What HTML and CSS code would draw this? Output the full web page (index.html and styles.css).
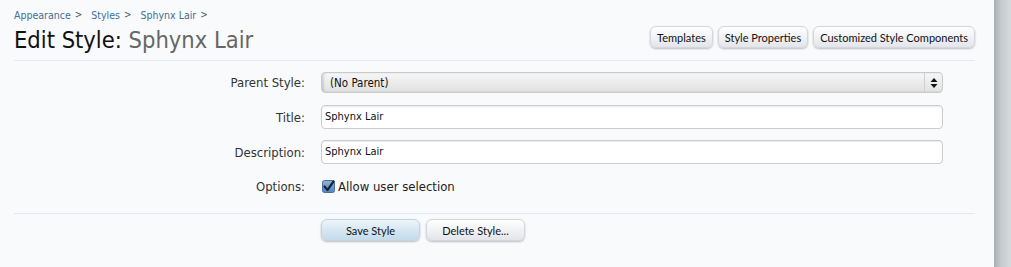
FILE: index.html
```html
<!DOCTYPE html>
<html>
<head>
<meta charset="utf-8">
<link rel="stylesheet" href="styles.css">
</head>
<body>
<div class="shell">
  <main class="main">
    <nav class="crumbs">
      <a class="crumb">Appearance</a><span class="sep">&gt;</span>
      <a class="crumb">Styles</a><span class="sep">&gt;</span>
      <a class="crumb">Sphynx Lair</a><span class="sep">&gt;</span>
    </nav>
    <header class="titlebar">
      <h1 class="title">Edit Style: <span class="title-sub">Sphynx Lair</span></h1>
      <div class="top-buttons">
        <button class="btn">Templates</button>
        <button class="btn">Style Properties</button>
        <button class="btn">Customized Style Components</button>
      </div>
    </header>
    <form class="form">
      <div class="row row-select">
        <label class="label">Parent Style:</label>
        <div class="select">
          <span class="select-text">(No Parent)</span>
          <span class="select-arrow">
            <svg width="8" height="12" viewBox="0 0 8 12"><path d="M4 1 L7.5 5 H0.5 Z M4 11 L7.5 7 H0.5 Z" fill="#111"/></svg>
          </span>
        </div>
      </div>
      <div class="row row-input">
        <label class="label">Title:</label>
        <div class="input">Sphynx Lair</div>
      </div>
      <div class="row row-input">
        <label class="label">Description:</label>
        <div class="input">Sphynx Lair</div>
      </div>
      <div class="row row-options">
        <label class="label">Options:</label>
        <div class="check">
          <svg class="checkbox" width="13" height="13" viewBox="0 0 13 13">
            <defs><linearGradient id="cg" x1="0" y1="0" x2="0" y2="1"><stop offset="0" stop-color="#8db3dd"/><stop offset="1" stop-color="#4f86c6"/></linearGradient></defs>
            <rect x="0.5" y="0.5" width="12" height="12" rx="2" fill="url(#cg)" stroke="#456f9e"/>
            <path d="M2.5 6.5 L5.5 10 L11.5 1.5" fill="none" stroke="#1b2330" stroke-width="2.2" stroke-linecap="round" stroke-linejoin="round"/>
          </svg>
          <span class="check-text">Allow user selection</span>
        </div>
      </div>
      <div class="submit-row">
        <button class="btn btn-primary" type="button">Save Style</button>
        <button class="btn btn-wide" type="button">Delete Style...</button>
      </div>
    </form>
  </main>
  <aside class="edge"></aside>
</div>
</body>
</html>
```
FILE: styles.css
```css
html, body {
  margin: 0;
  padding: 0;
  height: 100%;
}
body {
  background: #f9fafc;
  font-family: "DejaVu Sans Condensed", "DejaVu Sans", sans-serif;
  color: #333;
}
.shell {
  display: flex;
  height: 267px;
}
.main {
  flex: 1;
  padding: 0 19px 0 14px;
}
.edge {
  width: 17px;
  background: linear-gradient(to right, #a7b0b5 0%, #c3cacd 40%, #d6dbdd 100%);
}
.crumbs {
  padding-top: 7px;
  height: 16px;
  font-size: 10.5px;
  line-height: 16px;
  display: flex;
  align-items: center;
}
.crumb {
  color: #3e6f98;
}
.sep {
  color: #555;
  font-size: 10px;
  margin: 0 9px 0 4px;
}
.titlebar {
  display: flex;
  justify-content: space-between;
  align-items: flex-start;
  height: 37px;
  border-bottom: 1px solid #dcecef;
}
.title {
  margin: 2px 0 0 0;
  font-size: 23.5px;
  font-weight: normal;
  line-height: 30px;
  color: #111;
}
.title-sub {
  color: #666;
}
.top-buttons {
  display: flex;
  gap: 5px;
  margin-top: 3px;
}
.btn {
  font-family: Lato, "Open Sans", sans-serif;
  font-size: 11px;
  color: #111;
  height: 22px;
  padding: 0 6px;
  border: 1px solid #d3d6dc;
  border-radius: 6px;
  background: linear-gradient(to bottom, #ffffff 0%, #f1f2f5 50%, #e3e5ea 100%);
  box-shadow: 0 1px 2px rgba(0, 0, 0, 0.25);
  cursor: pointer;
}
.form {
  padding-top: 11px;
}
.row {
  display: grid;
  grid-template-columns: 291px 622px;
  column-gap: 16px;
  align-items: center;
}
.label {
  text-align: right;
  font-size: 13px;
  color: #333;
}
.row-select {
  height: 21px;
}
.select {
  height: 19px;
  display: flex;
  align-items: center;
  border: 1px solid #c9c9c9;
  border-radius: 4px;
  background: linear-gradient(to bottom, #f7f7f7 0%, #ececec 50%, #e0e0e0 100%);
  box-shadow: inset 2px 0 2px rgba(0,0,0,0.12);
}
.select-text {
  flex: 1;
  padding-left: 8px;
  font-size: 11.5px;
  color: #111;
}
.select-arrow {
  width: 17px;
  height: 19px;
  border-left: 1px solid #cfcfcf;
  display: flex;
  align-items: center;
  justify-content: center;
}
.row-input {
  margin-top: 12px;
  height: 24px;
}
.row-input + .row-input {
  margin-top: 11px;
}
.input {
  height: 22px;
  line-height: 22px;
  border: 1px solid #cccccc;
  border-radius: 4px;
  background: #fff;
  box-shadow: inset 0 1px 1px rgba(0,0,0,0.08);
  padding-left: 3px;
  font-size: 11px;
  color: #111;
}
.row-options {
  margin-top: 12px;
  height: 20px;
}
.check {
  display: flex;
  align-items: center;
  gap: 3px;
  padding-left: 1px;
}
.check-text {
  font-size: 13px;
  color: #222;
}
.submit-row {
  margin-top: 17px;
  border-top: 1px solid #dcecef;
  padding: 5px 0 0 307px;
  display: flex;
  gap: 6px;
}
.submit-row .btn {
  width: 99px;
  height: 22px;
}
.btn-primary {
  background: linear-gradient(to bottom, #eef5fa 0%, #d6e7f2 50%, #c4dbeb 100%);
  border-color: #c3d3df;
}
```
